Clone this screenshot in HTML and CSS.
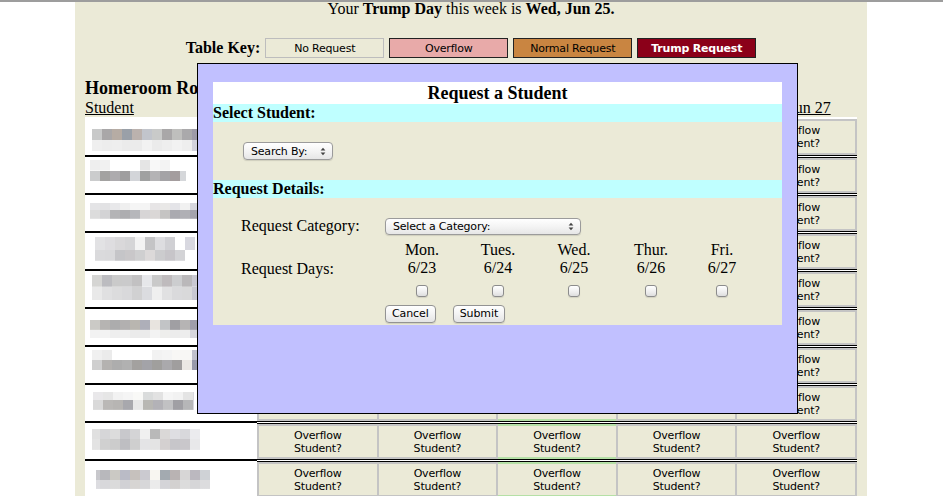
FILE: index.html
```html
<!DOCTYPE html>
<html>
<head>
<meta charset="utf-8">
<title>Homeroom Roster</title>
<link rel="stylesheet" href="styles.css">
</head>
<body>
<div class="topbar"></div>
<div class="wrap">
  <p class="trump-line">Your <b>Trump Day</b> this week is <b>Wed, Jun 25.</b></p>

  <div class="key">
    <span class="key-label">Table Key:</span>
    <span class="key-box none">No Request</span>
    <span class="key-box overflow">Overflow</span>
    <span class="key-box normal">Normal Request</span>
    <span class="key-box trump">Trump Request</span>
  </div>

  <h2 class="room">Homeroom Roster</h2>

  <div class="roster">
    <div class="head">
      <span class="h-student"><u>Student</u></span>
      <div class="h-days">
        <span><u>Mon, Jun 23</u></span>
        <span><u>Tue, Jun 24</u></span>
        <span><u>Wed, Jun 25</u></span>
        <span><u>Thu, Jun 26</u></span>
        <span><u>Fri, Jun 27</u></span>
      </div>
    </div>

    <div class="row first">
      <div class="student"><span class="blur n1"></span></div>
      <div class="days">
        <div class="cell">Overflow<br>Student?</div>
        <div class="cell">Overflow<br>Student?</div>
        <div class="cell today">Overflow<br>Student?</div>
        <div class="cell">Overflow<br>Student?</div>
        <div class="cell">Overflow<br>Student?</div>
      </div>
    </div>
    <div class="row">
      <div class="student"><span class="blur n2"></span></div>
      <div class="days">
        <div class="cell">Overflow<br>Student?</div>
        <div class="cell">Overflow<br>Student?</div>
        <div class="cell today">Overflow<br>Student?</div>
        <div class="cell">Overflow<br>Student?</div>
        <div class="cell">Overflow<br>Student?</div>
      </div>
    </div>
    <div class="row">
      <div class="student"><span class="blur n3"></span></div>
      <div class="days">
        <div class="cell">Overflow<br>Student?</div>
        <div class="cell">Overflow<br>Student?</div>
        <div class="cell today">Overflow<br>Student?</div>
        <div class="cell">Overflow<br>Student?</div>
        <div class="cell">Overflow<br>Student?</div>
      </div>
    </div>
    <div class="row">
      <div class="student"><span class="blur n4"></span></div>
      <div class="days">
        <div class="cell">Overflow<br>Student?</div>
        <div class="cell">Overflow<br>Student?</div>
        <div class="cell today">Overflow<br>Student?</div>
        <div class="cell">Overflow<br>Student?</div>
        <div class="cell">Overflow<br>Student?</div>
      </div>
    </div>
    <div class="row">
      <div class="student"><span class="blur n5"></span></div>
      <div class="days">
        <div class="cell">Overflow<br>Student?</div>
        <div class="cell">Overflow<br>Student?</div>
        <div class="cell today">Overflow<br>Student?</div>
        <div class="cell">Overflow<br>Student?</div>
        <div class="cell">Overflow<br>Student?</div>
      </div>
    </div>
    <div class="row">
      <div class="student"><span class="blur n6"></span></div>
      <div class="days">
        <div class="cell">Overflow<br>Student?</div>
        <div class="cell">Overflow<br>Student?</div>
        <div class="cell today">Overflow<br>Student?</div>
        <div class="cell">Overflow<br>Student?</div>
        <div class="cell">Overflow<br>Student?</div>
      </div>
    </div>
    <div class="row">
      <div class="student"><span class="blur n7"></span></div>
      <div class="days">
        <div class="cell">Overflow<br>Student?</div>
        <div class="cell">Overflow<br>Student?</div>
        <div class="cell today">Overflow<br>Student?</div>
        <div class="cell">Overflow<br>Student?</div>
        <div class="cell">Overflow<br>Student?</div>
      </div>
    </div>
    <div class="row">
      <div class="student"><span class="blur n8"></span></div>
      <div class="days">
        <div class="cell">Overflow<br>Student?</div>
        <div class="cell">Overflow<br>Student?</div>
        <div class="cell today">Overflow<br>Student?</div>
        <div class="cell">Overflow<br>Student?</div>
        <div class="cell">Overflow<br>Student?</div>
      </div>
    </div>
    <div class="row">
      <div class="student"><span class="blur n9"></span></div>
      <div class="days">
        <div class="cell">Overflow<br>Student?</div>
        <div class="cell">Overflow<br>Student?</div>
        <div class="cell today">Overflow<br>Student?</div>
        <div class="cell">Overflow<br>Student?</div>
        <div class="cell">Overflow<br>Student?</div>
      </div>
    </div>
    <div class="row">
      <div class="student"><span class="blur n10"></span></div>
      <div class="days">
        <div class="cell">Overflow<br>Student?</div>
        <div class="cell">Overflow<br>Student?</div>
        <div class="cell today">Overflow<br>Student?</div>
        <div class="cell">Overflow<br>Student?</div>
        <div class="cell">Overflow<br>Student?</div>
      </div>
    </div>
  </div>

  <div class="modal">
    <div class="panel">
      <div class="m-title">Request a Student</div>
      <div class="m-section">Select Student:</div>
      <div class="search">
        <div class="select search-by"><span>Search By:</span><svg class="arrows" width="6" height="9" viewBox="0 0 6 9"><path d="M0.6 3.6 L3 0.8 L5.4 3.6 Z M0.6 5.4 L3 8.2 L5.4 5.4 Z" fill="#444"/></svg></div>
      </div>
      <div class="m-section">Request Details:</div>
      <div class="details">
        <div class="lbl">Request Category:</div>
        <div class="select category"><span>Select a Category:</span><svg class="arrows" width="6" height="9" viewBox="0 0 6 9"><path d="M0.6 3.6 L3 0.8 L5.4 3.6 Z M0.6 5.4 L3 8.2 L5.4 5.4 Z" fill="#444"/></svg></div>

        <div class="lbl days-lbl">Request Days:</div>
        <div class="day">Mon.<br>6/23</div>
        <div class="day">Tues.<br>6/24</div>
        <div class="day">Wed.<br>6/25</div>
        <div class="day">Thur.<br>6/26</div>
        <div class="day">Fri.<br>6/27</div>

        <div class="cbw"><input type="checkbox" class="cb"></div>
        <div class="cbw"><input type="checkbox" class="cb"></div>
        <div class="cbw"><input type="checkbox" class="cb"></div>
        <div class="cbw"><input type="checkbox" class="cb"></div>
        <div class="cbw"><input type="checkbox" class="cb"></div>

        <div class="actions">
          <button class="btn">Cancel</button>
          <button class="btn">Submit</button>
        </div>
      </div>
    </div>
  </div>
</div>
</body>
</html>
```

FILE: styles.css
```css
* { box-sizing: border-box; }

html, body {
  margin: 0;
  padding: 0;
  overflow: hidden;
  background: #ffffff;
}

body {
  font-family: "Liberation Serif", "Times New Roman", serif;
  font-size: 16px;
  color: #000;
}

.topbar {
  position: fixed;
  top: 0;
  left: 0;
  right: 0;
  height: 2px;
  background: #9d9d9d;
  z-index: 20;
}

.wrap {
  position: relative;
  width: 792px;
  height: 496px;
  margin-left: 75px;
  padding: 0 10px;
  background: #ebead7;
}

.trump-line {
  margin: 0;
  text-align: center;
  line-height: normal;
}

/* table key */
.key {
  display: flex;
  justify-content: center;
  align-items: center;
  gap: 5px;
  margin-top: 20px;
  height: 20px;
}

.key-label { font-weight: bold; }

.key-box {
  width: 119px;
  height: 20px;
  display: flex;
  align-items: center;
  justify-content: center;
  border: 1px solid #222;
  font-family: "DejaVu Sans", sans-serif;
  font-size: 11px;
  letter-spacing: -0.2px;
}

.key-box.none { background: #ebead7; border-color: #bdbdbd; }
.key-box.overflow { background: #e8aaa9; }
.key-box.normal { background: #c98541; }
.key-box.trump { background: #8b0019; color: #fff; font-weight: bold; }

.room {
  margin: 20px 0 0;
  font-size: 18px;
  line-height: normal;
}

/* roster */
.head {
  display: flex;
  height: 18px;
  line-height: 18px;
}

.h-student { width: 172px; }

.h-days {
  flex: 1;
  display: grid;
  grid-template-columns: repeat(5, 1fr);
  column-gap: 2px;
  padding: 0 2px;
  text-align: center;
  white-space: nowrap;
}

.row {
  display: flex;
  height: 38px;
  background: #fff;
}

.student {
  width: 172px;
  background: #fff;
  border-top: 2px solid #000;
}

.days {
  flex: 1;
  display: grid;
  grid-template-columns: repeat(5, 1fr);
  column-gap: 2px;
  padding: 0 2px;
  background: #c4c4c4;
  background-clip: padding-box;
  border-top: 3px double #000;
}

.row.first .student { border-top: 0; }
.row.first .days { border-top: 2px solid #fff; }

.cell {
  display: flex;
  align-items: center;
  justify-content: center;
  text-align: center;
  background: #ebead7;
  border-top: 2px solid #c4c4c4;
  border-bottom: 2px solid #c4c4c4;
  font-family: "DejaVu Sans", sans-serif;
  font-size: 11px;
  line-height: 13px;
  letter-spacing: -0.2px;
}

.cell.today {
  border-top-color: #b5e0a6;
  border-bottom-color: #b5e0a6;
}

/* pixelated names */
.blur {
  display: block;
  background:
    var(--t) 0 0 / 100% var(--s) no-repeat,
    var(--b) 0 100% / 100% calc(100% - var(--s)) no-repeat;
}

.n1 {
  margin: 12px 0 0 7px; width: 110px; height: 22px; --s: 50%;
  --t: linear-gradient(90deg, #c8c9c9 0 10px, #a9a7a8 0 20px, #b6aca4 0 30px, #9aa0a8 0 40px, #bbb2ae 0 50px, #c2c5cc 0 60px, #c9cac9 0 70px, #a9a7a8 0 80px, #bfbfbd 0 90px, #aaa9ab 0 100px, #9d9aa8 0 110px);
  --b: linear-gradient(90deg, #efefef 0 10px, #ededed 0 20px, #eeeeee 0 30px, #ebebeb 0 40px, #ebebeb 0 50px, #f2f2f2 0 60px, #ebebeb 0 70px, #eeeeee 0 80px, #f2f2f2 0 90px, #eeeeee 0 100px, #d2d2dc 0 110px);
}
.n2 {
  margin: 3px 0 0 5px; width: 96px; height: 21px; --s: 50%;
  --t: linear-gradient(90deg, #eeeeee 0 10px, #f1f1f1 0 20px, #ffffff 0 50px, #e5e5e5 0 60px, #f8f8f8 0 70px, #f3f3f3 0 80px, #ffffff 0 96px);
  --b: linear-gradient(90deg, #cbcccd 0 10px, #a3a2a1 0 20px, #adabae 0 30px, #9f9e9f 0 40px, #d3d5d9 0 50px, #a0a1a1 0 60px, #b4b3b5 0 70px, #a4a3a6 0 80px, #a49d9e 0 90px, #d5d7da 0 96px);
}
.n3 {
  margin: 8px 0 0 5px; width: 110px; height: 16px; --s: 45%;
  --t: linear-gradient(90deg, #e4e4e6 0 10px, #e2e2e4 0 20px, #e8e8ea 0 30px, #efefef 0 40px, #f5f5f5 0 50px, #f4f4f4 0 60px, #e7e5e6 0 70px, #e9e8e7 0 80px, #e4e4e8 0 90px, #f1f1f1 0 100px, #d6d6de 0 110px);
  --b: linear-gradient(90deg, #dcdcdc 0 10px, #d3d3d5 0 20px, #b4b4b6 0 30px, #adadb0 0 40px, #b6b7bb 0 50px, #d7d5d6 0 60px, #dad7d6 0 70px, #c5c4c3 0 80px, #aaaab0 0 90px, #b0b0b5 0 100px, #a4a3ad 0 110px);
}
.n4 {
  margin: 4px 0 0 10px; width: 100px; height: 24px; --s: 55%;
  --t: linear-gradient(90deg, #e2e2e4 0 10px, #dedde0 0 20px, #d9d8da 0 30px, #d5d5d7 0 40px, #f3f3f3 0 50px, #c4c4c6 0 60px, #dddde0 0 70px, #d0d0d4 0 80px, #ffffff 0 90px, #d8d8e0 0 100px);
  --b: linear-gradient(90deg, #dadadc 0 10px, #d9d9db 0 20px, #c5c5c8 0 30px, #c9c7c9 0 40px, #cfcfd0 0 50px, #dcd9d9 0 60px, #ccccce 0 70px, #c7c5c9 0 80px, #d3d3d6 0 90px, #ffffff 0 100px);
}
.n5 {
  margin: 4px 0 0 7px; width: 110px; height: 25px; --s: 47%;
  --t: linear-gradient(90deg, #d5d5d3 0 10px, #bcbcc0 0 20px, #cacaca 0 30px, #cacacb 0 40px, #c2c1c2 0 50px, #e6e7ea 0 60px, #c9c9c9 0 70px, #bfbbbd 0 80px, #cccdcf 0 90px, #bab8ba 0 100px, #c9c8d2 0 110px);
  --b: linear-gradient(90deg, #e9e9e9 0 10px, #e0e0e1 0 20px, #dcdcdd 0 30px, #d9d9db 0 40px, #d1d1d2 0 50px, #dbdce0 0 60px, #efefef 0 70px, #e1e1e2 0 80px, #dadadc 0 90px, #d9d9da 0 100px, #c8c8d2 0 110px);
}
.n6 {
  margin: 11px 0 0 5px; width: 110px; height: 18px; --s: 55%;
  --t: linear-gradient(90deg, #cbcac6 0 10px, #b6b4b2 0 20px, #acacad 0 30px, #b2b0b0 0 40px, #b9b6b0 0 50px, #aeafb9 0 60px, #e8e4df 0 70px, #c2c4c6 0 80px, #a09fa3 0 90px, #b6b4b4 0 100px, #9f9dab 0 110px);
  --b: linear-gradient(90deg, #f2f2f2 0 10px, #f3f3f3 0 20px, #eeeeee 0 30px, #efefef 0 40px, #ebebeb 0 60px, #f3f3f3 0 70px, #eeeeec 0 80px, #ececec 0 90px, #ededed 0 100px, #d6d6dd 0 110px);
}
.n7 {
  margin: 3px 0 0 7px; width: 110px; height: 20px; --s: 50%;
  --t: linear-gradient(90deg, #f0f0f0 0 10px, #ebebeb 0 20px, #ffffff 0 60px, #f2f2f2 0 70px, #f4f4f4 0 80px, #f8f7f5 0 100px, #c0c0cc 0 110px);
  --b: linear-gradient(90deg, #cfcfcf 0 10px, #b4b2b0 0 20px, #adadad 0 30px, #b1b1b1 0 40px, #a3a19f 0 50px, #a3a3a8 0 60px, #a09f9d 0 70px, #aaa9ac 0 80px, #a09e9e 0 90px, #ebe8e4 0 100px, #9799aa 0 110px);
}
.n8 {
  margin: 7px 0 0 8px; width: 101px; height: 18px; --s: 45%;
  --t: linear-gradient(90deg, #e9e8ea 0 10px, #e6e6e6 0 20px, #f2f2f2 0 30px, #f5f5f5 0 40px, #f9f9f7 0 50px, #dadcdc 0 60px, #e2e2e2 0 70px, #f5f5f5 0 80px, #f2f2f2 0 90px, #e4e4e4 0 100px, #d8d8e0 0 101px);
  --b: linear-gradient(90deg, #d9d9d9 0 10px, #bab8b6 0 20px, #b7b5b3 0 30px, #a8a8ad 0 40px, #e8e8e8 0 50px, #b8b7b3 0 60px, #b3b2b7 0 70px, #c1c1c3 0 80px, #a09fa4 0 90px, #b6b6b8 0 100px, #d7d7df 0 101px);
}
.n9 {
  margin: 6px 0 0 7px; width: 108px; height: 21px; --s: 48%;
  --t: linear-gradient(90deg, #e0e0e0 0 8px, #d6d6d8 0 18px, #dcdcdc 0 28px, #c8c8cc 0 38px, #d4d4d6 0 48px, #f0f0f0 0 58px, #b9b9b9 0 68px, #dad8d7 0 78px, #dedee2 0 88px, #d8d8dc 0 98px, #ebebee 0 108px);
  --b: linear-gradient(90deg, #e3e3e3 0 8px, #d0d0d0 0 18px, #cccccc 0 28px, #bebec2 0 38px, #cfcfcf 0 48px, #e4e4e6 0 58px, #e4e4e4 0 68px, #d4d0d0 0 78px, #c7c6ca 0 88px, #c9c7cb 0 98px, #e8e8ea 0 108px);
}
.n10 {
  margin: 9px 0 0 11px; width: 114px; height: 19px; --s: 53%;
  --t: linear-gradient(90deg, #c8c8cc 0 4px, #b8b8bc 0 14px, #cbc9c4 0 24px, #babbc6 0 34px, #c6c1bd 0 44px, #cbcad0 0 54px, #f8f6f1 0 64px, #a3aab0 0 74px, #b9b3b3 0 84px, #d7d6d6 0 94px, #bbb8bf 0 104px, #cfd2d6 0 114px);
  --b: linear-gradient(90deg, #dcdce0 0 4px, #d8d8db 0 14px, #dbdbdb 0 24px, #d1d1d5 0 34px, #d7d5d3 0 44px, #d7d7d9 0 54px, #ebebeb 0 64px, #d4d4d8 0 74px, #d3d1d0 0 84px, #dcdcdc 0 94px, #d6d6d8 0 104px, #dcdcde 0 114px);
}

/* modal */
.modal {
  position: absolute;
  left: 122px;
  top: 63px;
  width: 601px;
  height: 351px;
  padding: 18px 15px;
  background: #c1c0ff;
  border: 1px solid #000;
  z-index: 5;
}

.panel { background: #ebead7; }

.m-title {
  background: #fff;
  text-align: center;
  font-weight: bold;
  font-size: 18px;
  line-height: 22px;
}

.m-section {
  background: #bfffff;
  font-weight: bold;
  font-size: 16px;
  line-height: 18px;
}

.search { padding: 20px 0 20px 30px; }

.select {
  display: flex;
  align-items: center;
  justify-content: space-between;
  height: 18px;
  padding: 0 6px 0 7px;
  border: 1px solid #9b9b9b;
  border-radius: 4px;
  background: linear-gradient(#ffffff, #f4f4f4 50%, #e6e6e6);
  box-shadow: 0 1px 1px rgba(0, 0, 0, 0.12);
  font-family: "DejaVu Sans", sans-serif;
  font-size: 11px;
  letter-spacing: -0.2px;
}

.search-by { width: 90px; }

.arrows { display: block; }

.details {
  display: grid;
  grid-template-columns: 172px 74px 78px 74px 80px 62px;
  row-gap: 5.5px;
  padding: 19px 0 2px;
  line-height: normal;
}

.lbl { padding-left: 28px; grid-column: 1; }

.category {
  grid-column: 2 / span 5;
  justify-self: start;
  align-self: center;
  width: 196px;
  height: 17px;
}

.days-lbl {
  grid-row: 2 / span 2;
  align-self: center;
}

.day {
  grid-row: 2;
  text-align: center;
}

.cbw {
  grid-row: 3;
  display: flex;
  justify-content: center;
  padding: 3px 0 1px;
}

.cb {
  appearance: none;
  -webkit-appearance: none;
  margin: 0;
  width: 12px;
  height: 12px;
  border: 1px solid #8c8c8c;
  border-radius: 3px;
  background: linear-gradient(#ffffff, #eeeeee 60%, #dedede);
  box-shadow: 0 1px 1px rgba(0, 0, 0, 0.1);
}

.actions {
  grid-row: 4;
  grid-column: 2 / -1;
  display: flex;
  gap: 17px;
  margin-top: 1px;
}

.btn {
  height: 18px;
  padding: 0 6px;
  margin: 0;
  border: 1px solid #939393;
  border-radius: 4px;
  background: linear-gradient(#ffffff, #f3f3f3 50%, #e4e4e4);
  box-shadow: 0 1px 1px rgba(0, 0, 0, 0.12);
  font-family: "DejaVu Sans", sans-serif;
  font-size: 11px;
  letter-spacing: -0.1px;
  line-height: 16px;
  color: #000;
}
```
